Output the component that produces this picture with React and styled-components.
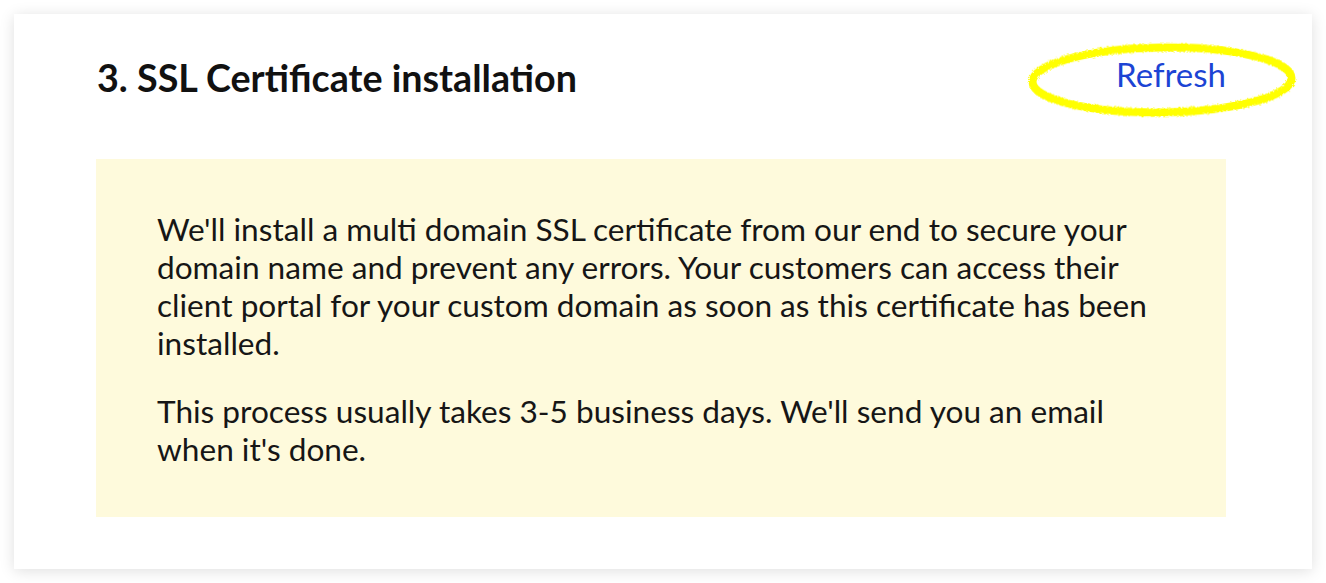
import React from "react";
import styled, { createGlobalStyle } from "styled-components";

const Global = createGlobalStyle`
  html, body { margin: 0; padding: 0; background: #ffffff; }
  body { font-family: Lato, "Noto Sans", sans-serif; }
`;

const Page = styled.div`
  padding: 14px;
  width: 1326px;
  box-sizing: border-box;
`;

const Card = styled.section`
  width: 1298px;
  height: 555px;
  box-sizing: border-box;
  background: #fff;
  box-shadow: 0 2px 14px rgba(0, 0, 0, 0.13);
  padding: 40px 86px 0 82px;
  display: flex;
  flex-direction: column;
`;

const Header = styled.header`
  display: flex;
  align-items: flex-start;
  justify-content: space-between;
  height: 48px;
  padding-left: 1px;
`;

const Title = styled.h2`
  margin: 0;
  font-family: Lato, sans-serif;
  font-weight: 700;
  font-size: 37.7px;
  line-height: 48px;
  color: #111;
`;

const LinkWrap = styled.div`
  position: relative;
  display: flex;
  align-items: center;
`;

const RefreshLink = styled.a`
  position: relative;
  z-index: 1;
  font-family: Lato, sans-serif;
  font-size: 33px;
  line-height: 40px;
  color: #1c44d4;
  text-decoration: none;
  cursor: pointer;
`;

const Scribble = styled.svg`
  position: absolute;
  left: -90px;
  top: -14px;
  width: 272px;
  height: 80px;
  pointer-events: none;
  overflow: visible;
`;

const Notice = styled.div`
  margin-top: 57px;
  background: #fefadc;
  height: 358px;
  box-sizing: border-box;
  padding: 51px 60px 0 61px;
`;

const Para = styled.p`
  margin: 0 0 30px;
  font-family: Lato, sans-serif;
  font-size: 31.6px;
  line-height: 38px;
  color: #161616;
`;

export default function App() {
  return (
    <>
      <Global />
      <Page>
        <Card>
          <Header>
            <Title>3. SSL Certificate installation</Title>
            <LinkWrap>
              <RefreshLink>Refresh</RefreshLink>
              <Scribble viewBox="0 0 272 80">
                <defs>
                  <filter id="crayon" x="-10%" y="-30%" width="120%" height="160%">
                    <feTurbulence type="fractalNoise" baseFrequency="1.2" numOctaves="2" seed="5" result="n" />
                    <feDisplacementMap in="SourceGraphic" in2="n" scale="4" />
                  </filter>
                </defs>
                <ellipse
                  cx="136"
                  cy="40"
                  rx="129.5"
                  ry="32.5"
                  fill="none"
                  stroke="#ffff00"
                  strokeWidth="8"
                  filter="url(#crayon)"
                  transform="rotate(-0.8 136 40)"
                />
              </Scribble>
            </LinkWrap>
          </Header>
          <Notice>
            <Para>
              We'll install a multi domain SSL certificate from our end to secure your
              domain name and prevent any errors. Your customers can access their
              client portal for your custom domain as soon as this certificate has been
              installed.
            </Para>
            <Para>
              This process usually takes 3-5 business days. We'll send you an email
              when it's done.
            </Para>
          </Notice>
        </Card>
      </Page>
    </>
  );
}
